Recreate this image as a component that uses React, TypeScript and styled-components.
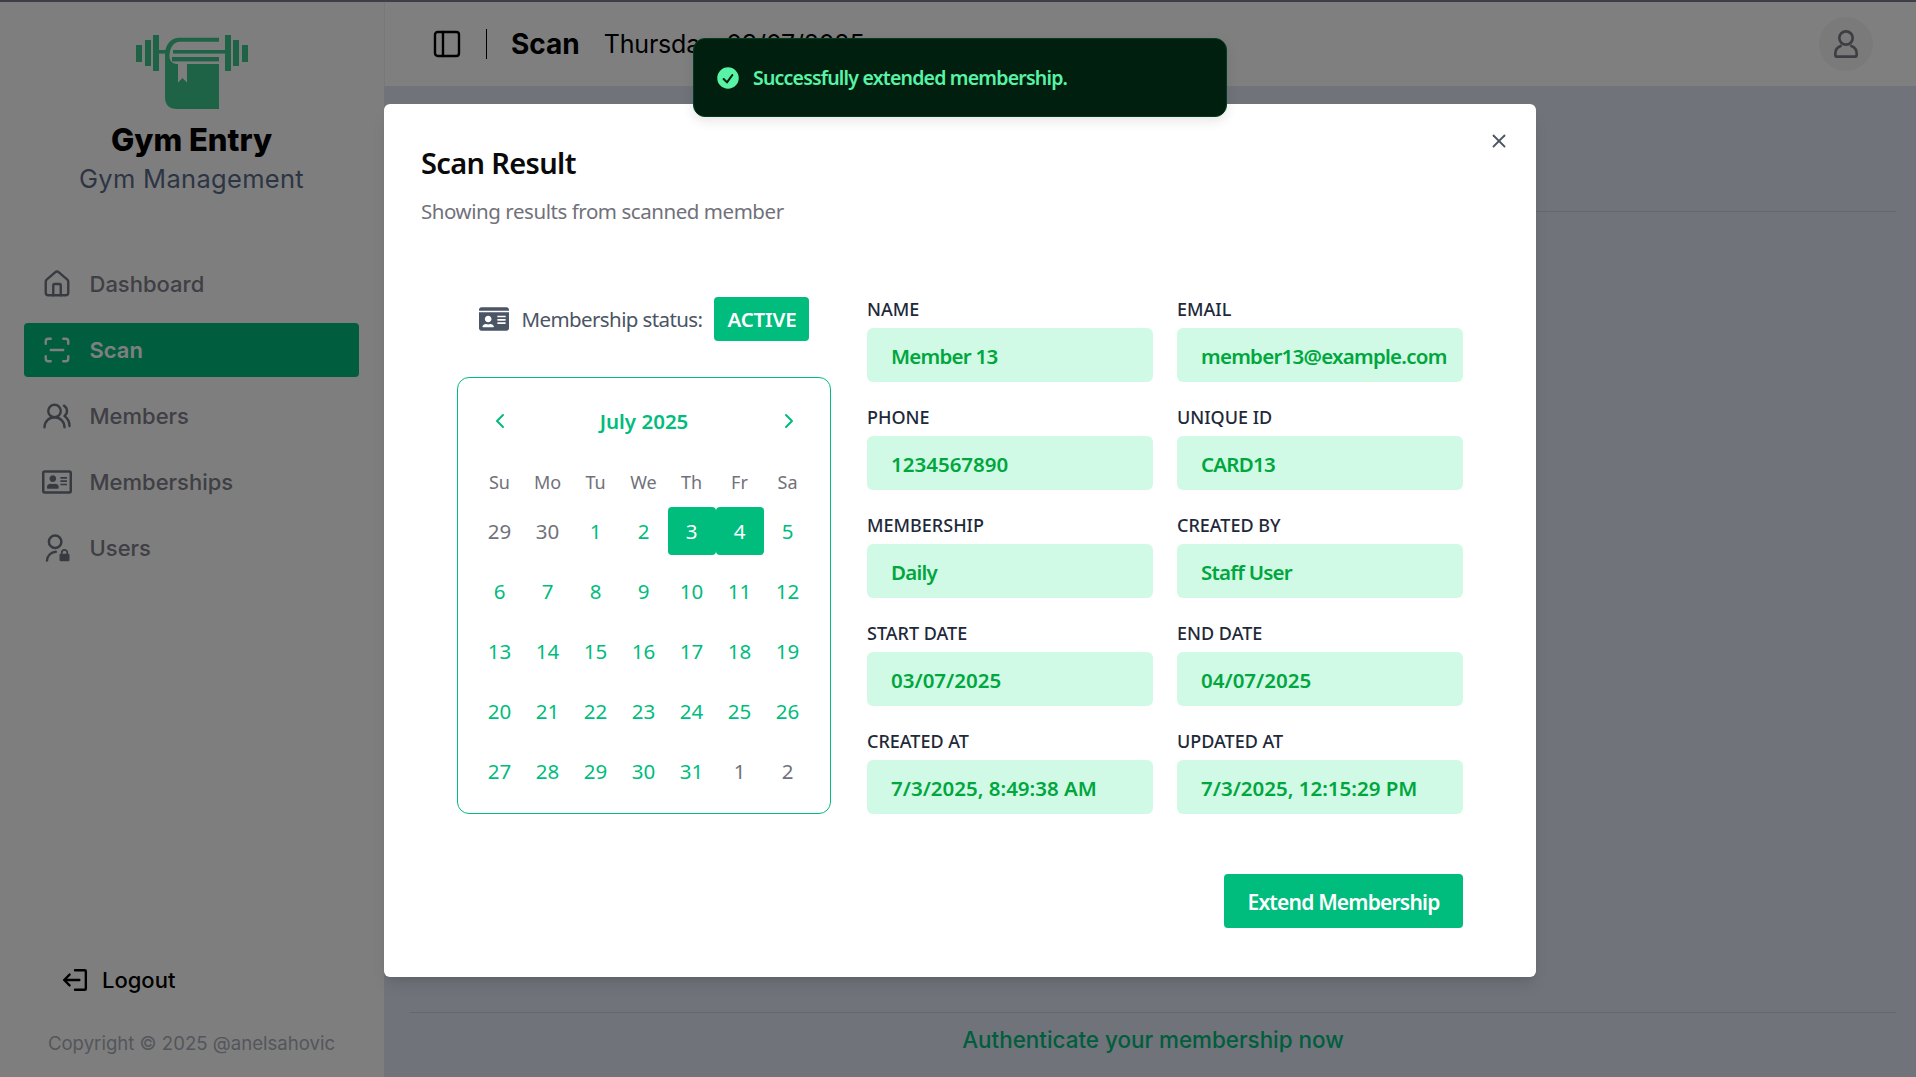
import React from "react";
import styled, { createGlobalStyle } from "styled-components";
import { ChevronLeft, ChevronRight, House, PanelLeft, ScanLine, UsersRound, X } from "lucide-react";
import { FaIdCard, FaRegAddressCard } from "react-icons/fa";

const GlobalStyle = createGlobalStyle`
	* {
		box-sizing: border-box;
	}
	html, body {
		margin: 0;
		padding: 0;
		background: #ffffff;
	}
	body {
		font-family: "Noto Sans", "Open Sans", sans-serif;
	}
`;

const brandFont = `"Inter", "Open Sans", sans-serif`;

const Page = styled.div`
	position: relative;
	width: 1916px;
	height: 1077px;
	overflow: hidden;
	display: flex;
	flex-direction: column;
`;
const TopStrip = styled.div`
	height: 2px;
	background: #7c7c90;
	flex: none;
`;
const Shell = styled.div`
	flex: 1;
	display: flex;
	min-height: 0;
`;

//sidebar
const Sidebar = styled.aside`
	width: 384px;
	flex: none;
	background: #fdfdfd;
	display: flex;
	flex-direction: column;
	align-items: stretch;
	padding: 33px 25px 0 24px;
	font-family: ${brandFont};
`;
const Brand = styled.div`
	display: flex;
	flex-direction: column;
	align-items: center;
`;
const BrandName = styled.div`
	margin-top: 10px;
	font-size: 31px;
	line-height: 42px;
	font-weight: 800;
	color: #000000;
`;
const BrandSub = styled.div`
	font-size: 25.5px;
	line-height: 36px;
	font-weight: 400;
	letter-spacing: 0.3px;
	color: #5a6b8a;
`;
const Nav = styled.nav`
	margin-top: 60px;
	display: flex;
	flex-direction: column;
	gap: 12px;
`;
const NavItem = styled.div<{ $active?: boolean }>`
	height: 54px;
	display: flex;
	align-items: center;
	gap: 17.5px;
	padding-left: 18px;
	border-radius: 4px;
	font-size: 22px;
	font-weight: ${(p) => (p.$active ? 600 : 500)};
	background: ${(p) => (p.$active ? "#00bc7d" : "transparent")};
	color: ${(p) => (p.$active ? "#ffffff" : "#7e7e8a")};
	svg {
		flex: none;
		width: 30px;
		height: 30px;
		color: ${(p) => (p.$active ? "#ffffff" : "#6f7482")};
	}
`;
const SidebarFooter = styled.div`
	margin-top: auto;
	display: flex;
	flex-direction: column;
	align-items: center;
	padding-bottom: 21px;
`;
const Logout = styled.div`
	align-self: flex-start;
	margin-left: 38px;
	display: flex;
	align-items: center;
	gap: 14px;
	font-size: 22px;
	font-weight: 500;
	color: #000000;
`;
const Copyright = styled.div`
	margin-top: 37px;
	font-size: 18.6px;
	line-height: 26px;
	color: #a9acb6;
`;

//main area
const Main = styled.main`
	flex: 1;
	min-width: 0;
	display: flex;
	flex-direction: column;
	background: #e0e6f4;
	font-family: ${brandFont};
`;
const Header = styled.header`
	height: 84px;
	flex: none;
	background: #ffffff;
	border-left: 1px solid #f0f0f0;
	display: flex;
	align-items: center;
	padding: 0 43px 0 46px;
	color: #000000;
`;
const HeaderDivider = styled.div`
	width: 1px;
	height: 30px;
	margin: 0 24px 0 23px;
	background: #000000;
`;
const HeaderTitle = styled.div`
	font-size: 28px;
	font-weight: 700;
`;
const HeaderDate = styled.div`
	margin-left: 24px;
	font-size: 25px;
	font-weight: 400;
	letter-spacing: -0.2px;
`;
const Avatar = styled.div`
	margin-left: auto;
	width: 54px;
	height: 54px;
	border-radius: 50%;
	background: #f5f5f5;
	color: #7a7a88;
	display: flex;
	align-items: center;
	justify-content: center;
`;
const MainBody = styled.div`
	flex: 1;
	display: flex;
	flex-direction: column;
	padding: 0 20px 0 26px;
`;
const TopRule = styled.div`
	height: 126px;
	flex: none;
	border-bottom: 1px solid #c9ced8;
`;
const BottomNote = styled.div`
	margin-top: auto;
	height: 65px;
	border-top: 1px solid #c9ced8;
	text-align: center;
	font-size: 22.4px;
	font-weight: 500;
	line-height: 53px;
	color: #00bc7d;
`;

//dialog
const Overlay = styled.div`
	position: absolute;
	inset: 0;
	background: rgba(0, 0, 0, 0.5);
`;
const Dialog = styled.section`
	position: absolute;
	top: 104px;
	left: 384px;
	width: 1152px;
	height: 873px;
	background: #ffffff;
	border-radius: 6px;
	box-shadow: 0 10px 15px -3px rgba(0, 0, 0, 0.1), 0 4px 6px -4px rgba(0, 0, 0, 0.1);
	padding: 37px 37px 0;
	display: flex;
	flex-direction: column;
`;
const CloseButton = styled.button`
	position: absolute;
	top: 25px;
	right: 25px;
	width: 24px;
	height: 24px;
	padding: 0;
	border: 0;
	background: transparent;
	color: #4b5563;
	display: flex;
	align-items: center;
	justify-content: center;
`;
const DialogTitle = styled.h2`
	margin: 0;
	font-size: 29px;
	line-height: 44px;
	font-weight: 600;
	letter-spacing: -0.65px;
	color: #0a0a0a;
`;
const DialogSubtitle = styled.p`
	margin: 8px 0 0;
	font-size: 20.5px;
	line-height: 36px;
	letter-spacing: -0.45px;
	color: #71717a;
`;
const DialogBody = styled.div`
	margin-top: 62px;
	padding: 0 36px;
	display: grid;
	grid-template-columns: 374px 596px;
	column-gap: 36px;
`;
const LeftColumn = styled.div`
	padding-top: 6px;
	display: flex;
	flex-direction: column;
	align-items: stretch;
`;
const StatusRow = styled.div`
	height: 44px;
	display: flex;
	align-items: center;
	justify-content: center;
	gap: 12px;
	font-size: 20.5px;
	letter-spacing: -0.6px;
	color: #4a5565;
	svg {
		flex: none;
		margin-right: 1px;
	}
`;
const StatusBadge = styled.span`
	height: 44px;
	width: 95px;
	display: flex;
	align-items: center;
	justify-content: center;
	border-radius: 4px;
	background: #00bc7d;
	color: #ffffff;
	font-weight: 600;
	letter-spacing: -0.2px;
`;

//calendar
const Calendar = styled.div`
	margin-top: 36px;
	height: 437px;
	border: 1.5px solid #00bc7d;
	border-radius: 12px;
	padding: 23px 17.5px 0;
`;
const CalendarHead = styled.div`
	display: flex;
	align-items: center;
	justify-content: space-between;
	height: 40px;
	padding: 0 12px;
	color: #00bc7d;
	font-size: 20.5px;
	font-weight: 600;
	svg {
		margin-top: -1px;
	}
`;
const WeekRow = styled.div`
	display: grid;
	grid-template-columns: repeat(7, 48px);
	margin-top: 28.5px;
`;
const WeekDay = styled.div`
	height: 24px;
	display: flex;
	align-items: center;
	justify-content: center;
	font-size: 18px;
	color: #71717a;
`;
const CalendarGrid = styled.div`
	display: grid;
	grid-template-columns: repeat(7, 48px);
	grid-auto-rows: 48px;
	row-gap: 12px;
	margin-top: 13px;
`;
const Day = styled.div<{ $muted?: boolean; $picked?: boolean }>`
	display: flex;
	align-items: center;
	justify-content: center;
	font-size: 20.5px;
	border-radius: 4px;
	background: ${(p) => (p.$picked ? "#00bc7d" : "transparent")};
	color: ${(p) => (p.$picked ? "#ffffff" : p.$muted ? "#71717a" : "#00bc7d")};
`;

//fields
const FieldGrid = styled.div`
	display: grid;
	grid-template-columns: repeat(2, 286px);
	column-gap: 24px;
	row-gap: 17px;
	align-content: start;
`;
const Field = styled.div`
	display: flex;
	flex-direction: column;
`;
const FieldLabel = styled.label`
	height: 37px;
	padding-bottom: 1px;
	display: flex;
	align-items: center;
	font-size: 18px;
	font-weight: 500;
	color: #1e2939;
	text-transform: uppercase;
`;
const FieldValue = styled.div<{ $numeric?: boolean }>`
	height: 54px;
	display: flex;
	align-items: center;
	padding: 1px 0 0 24px;
	border-radius: 6px;
	background: #d0fae5;
	color: #00a63e;
	font-size: 20.5px;
	font-weight: 600;
	letter-spacing: ${(p) => (p.$numeric ? "0" : "-0.75px")};
	white-space: nowrap;
`;
const DialogActions = styled.div`
	margin-top: 60px;
	padding-right: 36px;
	display: flex;
	justify-content: flex-end;
`;
const ExtendButton = styled.button`
	width: 239px;
	height: 54px;
	padding: 2px 0 0;
	border: 0;
	border-radius: 4px;
	background: #00bc7d;
	color: #ffffff;
	font-family: inherit;
	font-size: 21px;
	font-weight: 600;
	letter-spacing: -0.8px;
`;

//toast
const Toast = styled.div`
	position: absolute;
	top: 38px;
	left: 693px;
	width: 534px;
	height: 79px;
	display: flex;
	align-items: center;
	gap: 13px;
	padding: 0 22px;
	border-radius: 12px;
	border: 1px solid #003d1c;
	background: #001f0f;
	color: #59f3a6;
	font-size: 19.5px;
	font-weight: 600;
	letter-spacing: -0.8px;
	box-shadow: 0 4px 12px rgba(0, 0, 0, 0.1);
	svg {
		flex: none;
	}
`;

function LogoMark() {
	return (
		<svg width="112" height="74" viewBox="0 0 112 74" fill="#3ec68d">
			<rect x="0" y="10" width="6" height="17" />
			<rect x="9" y="5" width="6" height="26" />
			<rect x="17" y="0" width="6" height="36" />
			<rect x="89" y="0" width="6" height="36" />
			<rect x="97" y="5" width="6" height="26" />
			<rect x="106" y="10" width="6" height="17" />
			<rect x="23" y="15" width="9" height="3.6" />
			<rect x="37" y="15" width="52" height="3.6" />
			<rect x="36" y="22" width="47" height="4.4" />
			<path d="M83 2.7H43C35 2.7 29 10 29 19V62Q29 74 41 74H83V29H51V47.5L46.5 43L42 47.5V29H41C36 29 33 25 33.5 20C34 12 38 6.7 44 6.7H83Z" />
		</svg>
	);
}

function LockUserIcon() {
	return (
		<svg viewBox="0 0 24 24" fill="none" stroke="currentColor" strokeWidth="2" strokeLinecap="round">
			<circle cx="10.5" cy="7" r="5" />
			<path d="M4 22c.3-3.800 3-6.600 7-7" />
			<rect x="14" y="16.500" width="8" height="6" rx="1" fill="currentColor" stroke="none" />
			<path d="M15.800 17v-1.400a2.200 2.200 0 0 1 4.400 0V17" strokeWidth="1.400" />
		</svg>
	);
}

function LogoutIcon() {
	return (
		<svg width="26" height="26" viewBox="0 0 24 24" fill="none" stroke="currentColor" strokeWidth="2.200" strokeLinecap="round" strokeLinejoin="round">
			<path d="M12 3h9a1 1 0 0 1 1 1v16a1 1 0 0 1-1 1h-9" />
			<path d="M16 12H2M7 7l-5 5 5 5" />
		</svg>
	);
}

function ProfileIcon() {
	return (
		<svg width="32" height="32" viewBox="0 0 24 24" fill="none" stroke="currentColor" strokeWidth="2" strokeLinecap="round" strokeLinejoin="round">
			<circle cx="12" cy="7.500" r="5" />
			<path d="M8 13.500c-2.600 1-4 3-4 5.500v1a1.500 1.500 0 0 0 1.500 1.500h13A1.500 1.500 0 0 0 20 20v-1c0-2.500-1.400-4.500-4-5.500" />
		</svg>
	);
}

function ToastCheck() {
	return (
		<svg width="24" height="24" viewBox="0 0 20 20" fill="currentColor">
			<path
				fillRule="evenodd"
				clipRule="evenodd"
				d="M10 18a8 8 0 1 0 0-16 8 8 0 0 0 0 16Zm3.857-9.809a.75.75 0 0 0-1.214-.882l-3.483 4.79-1.88-1.88a.75.75 0 1 0-1.06 1.061l2.5 2.5a.75.75 0 0 0 1.137-.089l4-5.5Z"
				transform="translate(-1.2 -1.2) scale(1.12)"
			/>
		</svg>
	);
}

const navItems = [
	{ label: "Dashboard", icon: <House strokeWidth={1.9} /> },
	{ label: "Scan", icon: <ScanLine strokeWidth={1.9} />, active: true },
	{ label: "Members", icon: <UsersRound strokeWidth={1.9} /> },
	{ label: "Memberships", icon: <FaRegAddressCard /> },
	{ label: "Users", icon: <LockUserIcon /> },
];

const fields = [
	["Name", "Member 13"],
	["Email", "member13@example.com"],
	["Phone", "1234567890"],
	["Unique ID", "CARD13"],
	["Membership", "Daily"],
	["Created by", "Staff User"],
	["Start date", "03/07/2025"],
	["End date", "04/07/2025"],
	["Created at", "7/3/2025, 8:49:38 AM"],
	["Updated at", "7/3/2025, 12:15:29 PM"],
];

const weekDays = ["Su", "Mo", "Tu", "We", "Th", "Fr", "Sa"];

const days = [
	{ n: 29, muted: true },
	{ n: 30, muted: true },
	...Array.from({ length: 31 }, (_, i) => ({ n: i + 1, muted: false })),
	{ n: 1, muted: true },
	{ n: 2, muted: true },
];

function App() {
	return (
		<Page>
			<GlobalStyle />
			<TopStrip />
			<Shell>
				<Sidebar>
					<Brand>
						<LogoMark />
						<BrandName>Gym Entry</BrandName>
						<BrandSub>Gym Management</BrandSub>
					</Brand>
					<Nav>
						{navItems.map((item) => (
							<NavItem key={item.label} $active={item.active}>
								{item.icon}
								{item.label}
							</NavItem>
						))}
					</Nav>
					<SidebarFooter>
						<Logout>
							<LogoutIcon />
							Logout
						</Logout>
						<Copyright>Copyright © 2025 @anelsahovic</Copyright>
					</SidebarFooter>
				</Sidebar>
				<Main>
					<Header>
						<PanelLeft size={32} strokeWidth={1.8} />
						<HeaderDivider />
						<HeaderTitle>Scan</HeaderTitle>
						<HeaderDate>Thursday, 03/07/2025</HeaderDate>
						<Avatar>
							<ProfileIcon />
						</Avatar>
					</Header>
					<MainBody>
						<TopRule />
						<BottomNote>Authenticate your membership now</BottomNote>
					</MainBody>
				</Main>
			</Shell>
			<Overlay />
			<Dialog>
				<CloseButton>
					<X size={22} strokeWidth={2} />
				</CloseButton>
				<DialogTitle>Scan Result</DialogTitle>
				<DialogSubtitle>Showing results from scanned member</DialogSubtitle>
				<DialogBody>
					<LeftColumn>
						<StatusRow>
							<FaIdCard size={30} color="#4a5565" />
							Membership status:
							<StatusBadge>ACTIVE</StatusBadge>
						</StatusRow>
						<Calendar>
							<CalendarHead>
								<ChevronLeft size={24} strokeWidth={2} />
								July 2025
								<ChevronRight size={24} strokeWidth={2} />
							</CalendarHead>
							<WeekRow>
								{weekDays.map((d) => (
									<WeekDay key={d}>{d}</WeekDay>
								))}
							</WeekRow>
							<CalendarGrid>
								{days.map((d, i) => (
									<Day key={i} $muted={d.muted} $picked={!d.muted && (d.n === 3 || d.n === 4)}>
										{d.n}
									</Day>
								))}
							</CalendarGrid>
						</Calendar>
					</LeftColumn>
					<FieldGrid>
						{fields.map(([label, value]) => (
							<Field key={label}>
								<FieldLabel>{label}</FieldLabel>
								<FieldValue $numeric={/^\d/.test(value)}>{value}</FieldValue>
							</Field>
						))}
					</FieldGrid>
				</DialogBody>
				<DialogActions>
					<ExtendButton>Extend Membership</ExtendButton>
				</DialogActions>
			</Dialog>
			<Toast>
				<ToastCheck />
				Successfully extended membership.
			</Toast>
		</Page>
	);
}

export default App;
